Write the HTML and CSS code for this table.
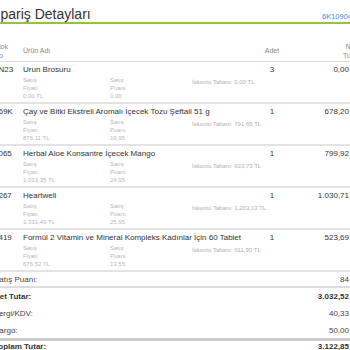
FILE: index.html
```html
<!DOCTYPE html>
<html lang="tr">
<head>
<meta charset="utf-8">
<title>Sipariş Detayları</title>
<link rel="stylesheet" href="styles.css">
</head>
<body>
<div class="page">
  <div class="head">
    <h1 class="title">Sipariş Detayları</h1>
    <span class="ord">6K1090453</span>
  </div>

  <div class="grid thead">
    <div class="c-code">Stok<br>No</div>
    <div class="c-name">Ürün Adı</div>
    <div class="c-qty">Adet</div>
    <div class="c-amt">Net<br>Tutar</div>
  </div>

  <div class="grid item">
    <div class="c-code">5N23</div>
    <div class="c-name">Urun Brosuru</div>
    <div class="c-qty">3</div>
    <div class="c-amt">0,00</div>
    <div class="details">
      <div class="d">Satış<br>Fiyatı<br>0,00 TL</div>
      <div class="d">Satış<br>Puanı<br>0,00</div>
      <div class="d isk">İskonto Tabanı: 0,00 TL</div>
    </div>
  </div>

  <div class="grid item">
    <div class="c-code">269K</div>
    <div class="c-name">Çay ve Bitki Ekstreli Aromalı İçecek Tozu Şeftali 51 g</div>
    <div class="c-qty">1</div>
    <div class="c-amt">678,20</div>
    <div class="details">
      <div class="d">Satış<br>Fiyatı<br>876,11 TL</div>
      <div class="d">Satış<br>Puanı<br>19,95</div>
      <div class="d isk">İskonto Tabanı: 791,65 TL</div>
    </div>
  </div>

  <div class="grid item">
    <div class="c-code">0065</div>
    <div class="c-name">Herbal Aloe Konsantre İçecek Mango</div>
    <div class="c-qty">1</div>
    <div class="c-amt">799,92</div>
    <div class="details">
      <div class="d">Satış<br>Fiyatı<br>1.033,35 TL</div>
      <div class="d">Satış<br>Puanı<br>24,95</div>
      <div class="d isk">İskonto Tabanı: 933,73 TL</div>
    </div>
  </div>

  <div class="grid item">
    <div class="c-code">0267</div>
    <div class="c-name">Heartwell</div>
    <div class="c-qty">1</div>
    <div class="c-amt">1.030,71</div>
    <div class="details">
      <div class="d">Satış<br>Fiyatı<br>1.331,49 TL</div>
      <div class="d">Satış<br>Puanı<br>25,95</div>
      <div class="d isk">İskonto Tabanı: 1.203,13 TL</div>
    </div>
  </div>

  <div class="grid item">
    <div class="c-code">0419</div>
    <div class="c-name">Formül 2 Vitamin ve Mineral Kompleks Kadınlar İçin 60 Tablet</div>
    <div class="c-qty">1</div>
    <div class="c-amt">523,69</div>
    <div class="details">
      <div class="d">Satış<br>Fiyatı<br>676,52 TL</div>
      <div class="d">Satış<br>Puanı<br>13,55</div>
      <div class="d isk">İskonto Tabanı: 611,30 TL</div>
    </div>
  </div>

  <div class="summary">
    <div class="srow line"><span>Satış Puanı:</span><span>84</span></div>
    <div class="srow bold"><span>Net Tutar:</span><span>3.032,52</span></div>
    <div class="srow"><span>Vergi/KDV:</span><span>40,33</span></div>
    <div class="srow thick"><span>Kargo:</span><span>50,00</span></div>
    <div class="srow bold last"><span>Toplam Tutar:</span><span>3.122,85</span></div>
  </div>
</div>
</body>
</html>
```

FILE: styles.css
```css
html, body {
  margin: 0;
  padding: 0;
  background: #fff;
}
body {
  overflow: hidden;
  width: 350px;
  height: 350px;
  font-family: "Liberation Sans", Arial, sans-serif;
  color: #333;
}
.page {
  margin-left: -12px;
  width: 382px;
}
.head {
  display: flex;
  align-items: flex-end;
  height: 22px;
  border-bottom: 2px solid #8dc63f;
  width: 362px;
}
.title {
  margin: 0;
  font-size: 14px;
  font-weight: normal;
  line-height: 16px;
  padding-bottom: 0;
  color: #333;
  flex: 1;
}
.ord {
  font-size: 7.5px;
  color: #3b8fd9;
  padding-bottom: 1px;
  width: 28px;
  white-space: nowrap;
}
.grid {
  display: grid;
  grid-template-columns: 35px 227px 44px 76px;
}
.c-code {
  padding-left: 6px;
  white-space: nowrap;
}
.c-qty {
  text-align: center;
}
.c-amt {
  text-align: right;
  padding-right: 21px;
}
.thead {
  margin-top: 16px;
  height: 21px;
  align-items: center;
  font-size: 7px;
  line-height: 9px;
  color: #888;
  border-bottom: 1px solid #ddd;
}
.thead .c-amt {
  text-align: center;
  padding-left: 38px;
  padding-right: 0;
}
.item {
  padding-top: 2px;
  padding-bottom: 2px;
  font-size: 8px;
  line-height: 12px;
  border-bottom: 2px solid #e3e3e3;
}
.details {
  grid-column: 2 / 5;
  display: grid;
  grid-template-columns: 87px 82px auto;
  font-size: 6px;
  line-height: 8px;
  color: #b8b8b8;
}
.isk {
  padding-top: 2px;
  color: #b0b0b0;
}
.summary {
  font-size: 8px;
  color: #444;
}
.srow {
  display: flex;
  justify-content: space-between;
  align-items: center;
  height: 17px;
  padding-left: 6px;
  padding-right: 21px;
}
.srow.line {
  height: 14px;
  border-bottom: 2px solid #ddd;
}
.srow.thick {
  height: 16px;
  border-bottom: 3px solid #ccc;
}
.srow.bold {
  font-weight: bold;
  color: #333;
}
.srow.last {
  align-items: flex-start;
  line-height: 10px;
  padding-top: 1px;
  height: 10px;
}
```
